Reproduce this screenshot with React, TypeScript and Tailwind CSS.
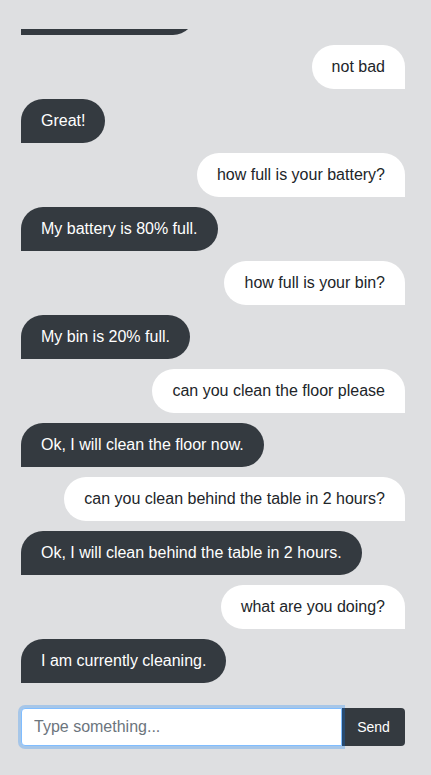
const messages = [
  { from: 'bot', text: "I'm fine, thank you!" },
  { from: 'user', text: 'not bad' },
  { from: 'bot', text: 'Great!' },
  { from: 'user', text: 'how full is your battery?' },
  { from: 'bot', text: 'My battery is 80% full.' },
  { from: 'user', text: 'how full is your bin?' },
  { from: 'bot', text: 'My bin is 20% full.' },
  { from: 'user', text: 'can you clean the floor please' },
  { from: 'bot', text: 'Ok, I will clean the floor now.' },
  { from: 'user', text: 'can you clean behind the table in 2 hours?' },
  { from: 'bot', text: 'Ok, I will clean behind the table in 2 hours.' },
  { from: 'user', text: 'what are you doing?' },
  { from: 'bot', text: 'I am currently cleaning.' },
];

const App = () => {
  return (
    <div
      className="h-[775px] bg-[#dedfe1] pt-[29px] pl-[21px] pr-[26px] flex flex-col"
      style={{ fontFamily: '"Liberation Sans", Arial, sans-serif' }}
    >
      {/* chat history, scrolled to the bottom */}
      <div className="h-[654px] shrink-0 overflow-hidden flex flex-col justify-end gap-[10px]">
        {messages.map((m, i) =>
          m.from === 'user' ? (
            <div key={i} className="flex justify-end shrink-0">
              <div className="bg-white text-[#212529] text-base leading-6 px-5 py-[10px] rounded-[22px] rounded-br-none whitespace-nowrap">
                {m.text}
              </div>
            </div>
          ) : (
            <div key={i} className="flex justify-start shrink-0">
              <div className="bg-[#343a40] text-white text-base leading-6 px-5 py-[10px] rounded-[22px] rounded-bl-none whitespace-nowrap">
                {m.text}
              </div>
            </div>
          )
        )}
      </div>

      {/* input row */}
      <div className="mt-[25px] flex h-[38px]">
        <input
          type="text"
          placeholder="Type something..."
          className="relative z-10 flex-1 min-w-0 h-[38px] bg-white border border-[#80bdff] rounded-l-[4px] px-3 text-base text-[#495057] placeholder:text-[#6c757d] outline-none shadow-[0_0_0_3px_rgba(0,123,255,0.25)]"
          style={{ fontFamily: '"Liberation Sans", Arial, sans-serif' }}
        />
        <button className="h-[38px] w-[63px] bg-[#343a40] text-white text-sm rounded-r-[4px]">
          Send
        </button>
      </div>
    </div>
  );
};

export default App;
